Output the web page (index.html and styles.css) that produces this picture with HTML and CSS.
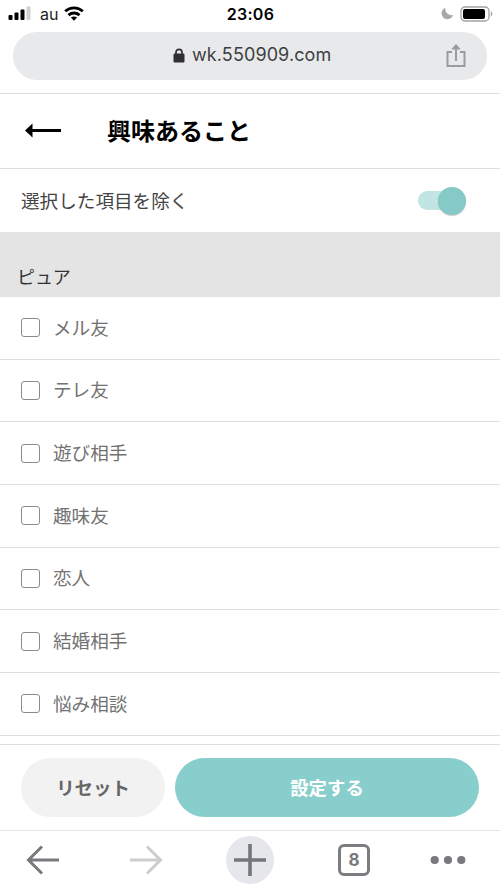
FILE: index.html
```html
<!DOCTYPE html>
<html lang="ja">
<head>
<meta charset="utf-8">
<title>興味あること</title>
<link rel="stylesheet" href="styles.css">
</head>
<body>
<div class="screen">
  <div class="status">
    <div class="status-left">
      <svg class="signal" width="23" height="15" viewBox="0 0 23 15"><rect x="0.5" y="9" width="4" height="5" rx="1"/><rect x="6.5" y="6.5" width="4" height="7.5" rx="1"/><rect x="12.5" y="3.5" width="4" height="10.5" rx="1"/><rect x="18.5" y="0.5" width="4" height="13.5" rx="1" fill="#d0d0d0"/></svg>
      <span class="carrier">au</span>
      <svg class="wifi" width="20" height="15" viewBox="0 0 20 15"><g fill="none" stroke="#000" stroke-width="2.8"><path d="M1.200 5.300C6.200.6 13.800.6 18.800 5.300"/><path d="M4.500 9.100C7.600 6.300 12.400 6.300 15.500 9.100"/></g><path d="M6.900 11.500C8.700 10.100 11.300 10.100 13.100 11.500L10 14.700Z"/></svg>
    </div>
    <span class="clock">23:06</span>
    <div class="status-right">
      <svg width="13" height="13" viewBox="0 0 13 13"><path d="M4.300.7C3.800 5.200 7 8.800 12.200 8.300 9.800 13 4 13.600 1.500 9.600-.5 6.200.8 2.200 4.300.7Z" fill="#a9a9ab"/></svg>
      <svg class="battery" width="33" height="16" viewBox="0 0 33 16"><rect x="1" y="1" width="28" height="14" rx="4" fill="#fff" stroke="#a2a2a2" stroke-width="1.3"/><rect x="3" y="3" width="22" height="10" rx="2"/><path d="M30.800 5.300C32.800 6 32.800 10 30.800 10.700Z" fill="#a2a2a2"/></svg>
    </div>
  </div>
  <div class="address">
    <svg class="lock" width="12" height="15" viewBox="0 0 12 15"><path d="M3 6V4.300a3 3 0 0 1 6 0V6" fill="none" stroke="#303034" stroke-width="1.700"/><rect x=".5" y="5.500" width="11" height="9" rx="1.200" fill="#303034"/></svg>
    <span class="url">wk.550909.com</span>
    <svg class="share" width="20" height="25" viewBox="0 0 20 25" fill="none" stroke="#9a9b9f" stroke-width="2"><path d="M6 9H1.500V23H18.500V9H14M10 18V3"/><path d="M6 6L10 1.500 14 6Z" fill="#9a9b9f" stroke-width="1"/></svg>
  </div>
  <header class="header">
    <svg class="back" width="37" height="15" viewBox="0 0 37 15"><path d="M0 7.500L7.500.5V6H36V9H7.500V14.500Z"/></svg>
    <h1>興味あること</h1>
  </header>
  <div class="exclude">
    <span class="exclude-label">選択した項目を除く</span>
    <span class="toggle"><span class="knob"></span></span>
  </div>
  <h2 class="section">ピュア</h2>
  <div class="list">
    <label class="item"><input type="checkbox"><span>メル友</span></label>
    <label class="item"><input type="checkbox"><span>テレ友</span></label>
    <label class="item"><input type="checkbox"><span>遊び相手</span></label>
    <label class="item"><input type="checkbox"><span>趣味友</span></label>
    <label class="item"><input type="checkbox"><span>恋人</span></label>
    <label class="item"><input type="checkbox"><span>結婚相手</span></label>
    <label class="item"><input type="checkbox"><span>悩み相談</span></label>
  </div>
  <div class="actions">
    <button class="reset">リセット</button>
    <button class="apply">設定する</button>
  </div>
  <nav class="nav">
    <svg width="34" height="30" viewBox="0 0 34 30" fill="none" stroke="#77797d" stroke-width="3"><path d="M33 15H3M16 1.500L2.500 15 16 28.500"/></svg>
    <svg class="forward" width="34" height="30" viewBox="0 0 34 30" fill="none" stroke="#cdcdcf" stroke-width="3"><path d="M1 15H31M18 1.500L31.500 15 18 28.500"/></svg>
    <span class="plus"><svg width="32" height="32" viewBox="0 0 32 32" fill="none" stroke="#74767c" stroke-width="3.600"><path d="M0 16H32M16 0V32"/></svg></span>
    <span class="tabs">8</span>
    <svg width="36" height="10" viewBox="0 0 36 10" fill="#77797d"><circle cx="4.700" cy="5" r="4.100"/><circle cx="18" cy="5" r="4.100"/><circle cx="31.300" cy="5" r="4.100"/></svg>
  </nav>
</div>
</body>
</html>
```
FILE: styles.css
```css
* { box-sizing: border-box; }
body {
  margin: 0;
  background: #fff;
  color: #000;
  font-family: "Noto Sans CJK JP", sans-serif;
}
svg { display: block; flex: none; }
.screen {
  width: 500px;
  height: 889px;
  overflow: hidden;
  display: flex;
  flex-direction: column;
}
.screen > * { flex: none; }
.status {
  height: 32px;
  padding: 0 7px 5px 8px;
  display: grid;
  grid-template-columns: 1fr auto 1fr;
  align-items: center;
  font-family: Inter, sans-serif;
}
.status-left, .status-right { display: flex; align-items: center; }
.status-right { justify-content: flex-end; gap: 6px; }
.carrier { margin: 0 6px 0 9px; font-size: 16px; line-height: 20px; color: #222; }
.clock { font-size: 16px; font-weight: 600; letter-spacing: .3px; line-height: 20px; }
.address {
  height: 48px;
  margin: 0 13px 13px;
  padding: 0 21px 2px 160px;
  border-radius: 24px;
  background: #e8e9eb;
  display: flex;
  align-items: center;
}
.url {
  margin-left: 7px;
  flex: 1;
  font: 18px/24px Inter, sans-serif;
  letter-spacing: .1px;
  color: #3d3e42;
}
.header {
  height: 76px;
  border-top: 1px solid #dedede;
  border-bottom: 1px solid #dedede;
  padding: 0 0 2px 25px;
  display: flex;
  align-items: center;
  gap: 45px;
}
h1 { margin: 0; font-size: 24px; line-height: 36px; font-weight: 700; }
.exclude {
  height: 63px;
  padding: 0 34px 0 21px;
  display: flex;
  align-items: center;
  justify-content: space-between;
  font-size: 18.6px;
  color: #444;
}
.exclude-label { padding-bottom: 2px; }
.toggle {
  width: 48px;
  height: 19px;
  border-radius: 10px;
  background: #c0e5e2;
  display: flex;
  align-items: center;
  justify-content: flex-end;
}
.knob {
  width: 28px;
  height: 28px;
  border-radius: 50%;
  background: #86cac8;
  box-shadow: 0 1px 1px rgba(0, 0, 0, .2);
}
.section {
  margin: 0;
  height: 65px;
  padding: 30px 0 0 17px;
  background: #e4e4e4;
  font-size: 18px;
  line-height: 28px;
  font-weight: 400;
  color: #333;
}
.list { height: 447px; padding-bottom: 8px; }
.item {
  height: 62.67px;
  border-bottom: 1px solid #dedede;
  padding-left: 21px;
  display: flex;
  align-items: center;
  gap: 13px;
  font-size: 18.6px;
  line-height: 28px;
  color: #727272;
}
.item span { padding-bottom: 2px; }
.item input {
  appearance: none;
  width: 19px;
  height: 19px;
  margin: 0;
  border: 1px solid #8b8b8b;
  border-radius: 3px;
  background: #fff;
}
.actions {
  height: 86px;
  border-top: 1px solid #dedede;
  padding: 13px 21px 0;
  display: flex;
  gap: 10px;
}
button {
  height: 59px;
  padding: 0 0 2px;
  border: 0;
  border-radius: 30px;
  font: 700 18.4px/28px "Noto Sans CJK JP", sans-serif;
}
.reset { width: 144px; background: #f2f2f2; color: #666; }
.apply { flex: 1; background: #88cecc; color: #fff; }
.nav {
  height: 59px;
  border-top: 1px solid #e5e5e5;
  padding-left: 26px;
  display: flex;
  align-items: center;
}
.forward { margin-left: 69px; }
.plus {
  width: 48px;
  height: 48px;
  margin: 0 64px 0 63px;
  border-radius: 50%;
  background: #e6e7ea;
  display: flex;
  align-items: center;
  justify-content: center;
}
.tabs {
  width: 32px;
  height: 32px;
  margin-right: 60px;
  border: 3px solid #7b7d80;
  border-radius: 6px;
  text-align: center;
  font: 700 17px/26px Inter, sans-serif;
  color: #77797d;
}
```
